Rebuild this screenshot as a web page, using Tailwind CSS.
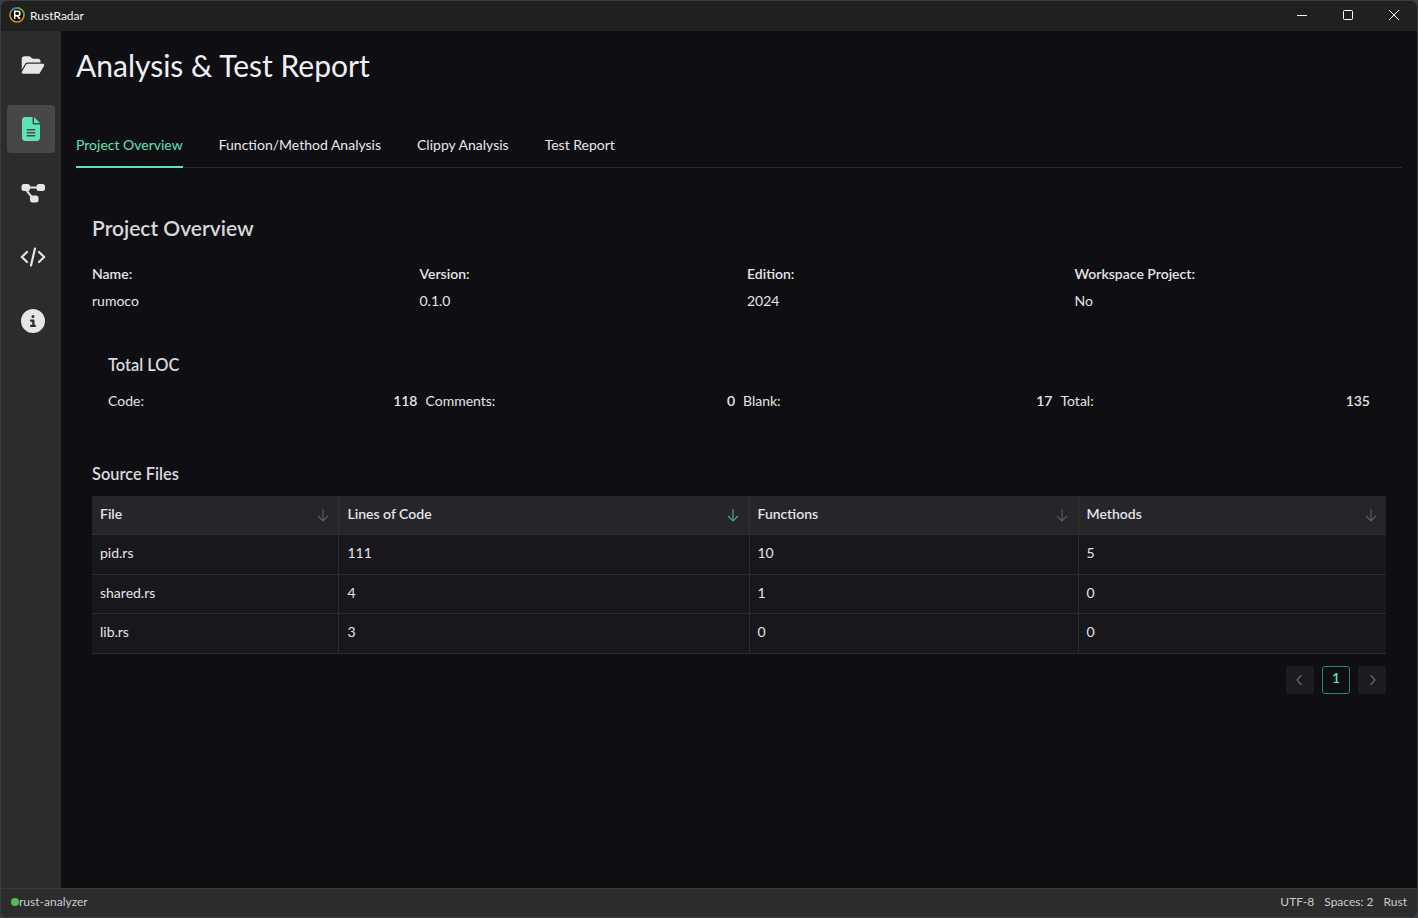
<!DOCTYPE html>
<html>
<head>
<meta charset="utf-8">
<script src="https://cdn.jsdelivr.net/npm/@tailwindcss/browser@4"></script>
</head>
<body class="m-0 bg-[#3a3f44]">
<div class="w-[1418px] h-[918px] flex flex-col overflow-hidden rounded-[8px] border border-[#3c3c3c] box-border font-['Lato','Noto_Sans',sans-serif] text-[14px] text-[#e4e4e6] bg-[#0f0f13]">
  <header class="h-[30px] pb-[2px] shrink-0 flex items-center bg-[#202020]">
    <div class="w-[30px] pl-[8px] flex items-center">
      <svg width="16" height="16" viewBox="0 0 16 16"><circle cx="8" cy="8" r="7" fill="#111" stroke="#e08a1e" stroke-width="1.6"/><path d="M8 1a7 7 0 0 1 7 7" fill="none" stroke="#5aa83a" stroke-width="1.6"/><path d="M1.5 5.500A7 7 0 0 1 8 1" fill="none" stroke="#2f7fd0" stroke-width="1.6"/><path d="M5.700 12V4.200h3a2.200 2.200 0 0 1 0 4.500h-3M8.400 8.700 10.800 12" fill="none" stroke="#fff" stroke-width="1.500"/></svg>
    </div>
    <span class="text-[12px] text-[#f2f2f2] ml-[-1px] mt-[1px]">RustRadar</span>
    <div class="ml-auto flex items-center text-white">
      <div class="w-[46px] h-[28px] flex items-center justify-center"><svg width="12" height="12" viewBox="0 0 12 12"><path d="M1 6.500h10" stroke="#fff" stroke-width="1"/></svg></div>
      <div class="w-[46px] h-[28px] flex items-center justify-center"><svg width="12" height="12" viewBox="0 0 12 12"><rect x="1.500" y="1.500" width="9" height="9" rx="1" fill="none" stroke="#fff" stroke-width="1"/></svg></div>
      <div class="w-[46px] h-[28px] flex items-center justify-center"><svg width="12" height="12" viewBox="0 0 12 12"><path d="M1 1l10 10M11 1 1 11" stroke="#fff" stroke-width="1"/></svg></div>
    </div>
  </header>
  <div class="flex flex-1 min-h-0">
    <aside class="w-[60px] shrink-0 bg-[#2c2c2c] flex flex-col items-center pt-[10px] gap-[16px]">
      <div class="w-[48px] h-[48px] pl-[4px] flex items-center justify-center">
        <svg width="26" height="20" viewBox="0 0 576 512" fill="#e6e6e6"><path d="M88.700 223.800 0 375.800V96C0 60.700 28.700 32 64 32h117.500c17 0 33.300 6.700 45.300 18.700l26.500 26.500c12 12 28.300 18.700 45.300 18.700H416c35.300 0 64 28.700 64 64v32H144c-22.800 0-43.800 12.100-55.300 31.800zm27.600 16.100C122.100 230 132.600 224 144 224h400c11.500 0 22 6.100 27.700 16.100 5.700 10 5.700 22.200-.1 32.100l-112 192C453.900 474 443.400 480 432 480H32c-11.500 0-22-6.100-27.700-16.100-5.700-10-5.700-22.200.1-32.100l112-192z"/></svg>
      </div>
      <div class="w-[48px] h-[48px] rounded-[4px] bg-[#474747] flex items-center justify-center">
        <svg width="18" height="24" viewBox="0 0 384 512" fill="#5fe3b3"><path d="M64 0C28.700 0 0 28.700 0 64v384c0 35.300 28.700 64 64 64h256c35.300 0 64-28.700 64-64V160H256c-17.700 0-32-14.300-32-32V0H64zm192 0v128h128L256 0zM112 256h160c8.800 0 16 7.200 16 16s-7.200 16-16 16H112c-8.800 0-16-7.200-16-16s7.200-16 16-16zm0 64h160c8.800 0 16 7.200 16 16s-7.200 16-16 16H112c-8.800 0-16-7.200-16-16s7.200-16 16-16zm0 64h160c8.800 0 16 7.200 16 16s-7.200 16-16 16H112c-8.800 0-16-7.200-16-16s7.200-16 16-16z"/></svg>
      </div>
      <div class="w-[48px] h-[48px] pl-[4px] flex items-center justify-center">
        <svg width="24" height="20" viewBox="0 0 24 20" fill="#e6e6e6"><rect x="0.500" y="1" width="8.500" height="7" rx="2.500"/><rect x="15.500" y="1" width="8.500" height="7" rx="2.500"/><rect x="9" y="12.500" width="8.500" height="7" rx="2.500"/><path d="M8 3.500h8v2H8zM6.500 7l5.500 7-1.500 1.300L5 8.500z"/></svg>
      </div>
      <div class="w-[48px] h-[48px] pl-[4px] flex items-center justify-center">
        <svg width="26" height="20" viewBox="0 0 26 20" fill="none" stroke="#e6e6e6" stroke-width="2.200" stroke-linecap="round" stroke-linejoin="round"><path d="M7 5 1.800 10 7 15M19 5l5.200 5L19 15M15 1.500 11 18.500"/></svg>
      </div>
      <div class="w-[48px] h-[48px] pl-[4px] flex items-center justify-center">
        <svg width="24" height="24" viewBox="0 0 512 512" fill="#e6e6e6"><path d="M256 512a256 256 0 1 0 0-512 256 256 0 1 0 0 512zm-40-176h24v-64h-24c-13.300 0-24-10.700-24-24s10.700-24 24-24h48c13.300 0 24 10.700 24 24v88h8c13.300 0 24 10.700 24 24s-10.700 24-24 24h-80c-13.300 0-24-10.700-24-24s10.700-24 24-24zm40-208a32 32 0 1 1 0 64 32 32 0 1 1 0-64z"/></svg>
      </div>
    </aside>
    <main class="flex-1 min-w-0 pl-[15px] pr-[15px] pt-[14px]">
      <h1 class="text-[30px] leading-[40px] font-normal text-[#f0f0f2] m-0">Analysis &amp; Test Report</h1>
      <nav class="mt-[37px] flex gap-[36px] border-b border-[#2a2a2e] h-[46px] text-[14px] text-[#e8e8ea]">
        <div class="h-[46px] pt-[13px] leading-[20px] border-b-2 border-[#5fe3b3] text-[#5fe3b3]">Project Overview</div>
        <div class="pt-[13px] leading-[20px]">Function/Method Analysis</div>
        <div class="pt-[13px] leading-[20px]">Clippy Analysis</div>
        <div class="pt-[13px] leading-[20px]">Test Report</div>
      </nav>
      <section class="px-[16px] pt-[44px]">
        <h2 class="text-[21px] leading-[32px] font-semibold text-[#d8d8dc] m-0">Project Overview</h2>
        <div class="grid grid-cols-4 gap-x-[16px] mt-[19px]">
          <div><div class="font-semibold leading-[22px]">Name:</div><div class="mt-[5px] leading-[22px]">rumoco</div></div>
          <div><div class="font-semibold leading-[22px]">Version:</div><div class="mt-[5px] leading-[22px]">0.1.0</div></div>
          <div><div class="font-semibold leading-[22px]">Edition:</div><div class="mt-[5px] leading-[22px]">2024</div></div>
          <div><div class="font-semibold leading-[22px]">Workspace Project:</div><div class="mt-[5px] leading-[22px]">No</div></div>
        </div>
        <div class="px-[16px] mt-[41px]">
          <h3 class="text-[16.4px] leading-[24px] font-semibold text-[#d8d8dc] m-0">Total LOC</h3>
          <div class="grid grid-cols-4 gap-x-[8px] mt-[13px] leading-[22px]">
            <div class="flex justify-between"><span>Code:</span><span class="font-semibold">118</span></div>
            <div class="flex justify-between"><span>Comments:</span><span class="font-semibold">0</span></div>
            <div class="flex justify-between"><span>Blank:</span><span class="font-semibold">17</span></div>
            <div class="flex justify-between"><span>Total:</span><span class="font-semibold">135</span></div>
          </div>
        </div>
        <h3 class="text-[16.4px] leading-[24px] font-semibold text-[#d8d8dc] m-0 mt-[50px]">Source Files</h3>
        <table class="w-[1294px] mt-[10px] border-collapse table-fixed bg-[#18181c]">
          <colgroup><col class="w-[246px]"><col class="w-[411px]"><col class="w-[329px]"><col class="w-[308px]"></colgroup>
          <thead>
            <tr class="h-[38px] bg-[#26262a] border-b border-[#303034]">
              <th class="px-[8px] pb-[3px] text-left font-semibold border-r border-[#303034]"><div class="flex items-center justify-between">File<svg class="mt-[3px]" width="14" height="14" viewBox="0 0 14 14" fill="none" stroke="#5c5c61" stroke-width="1.100"><path d="M7 1v12M2 8 7 13l5-5"/></svg></div></th>
              <th class="pl-[9px] pr-[8px] pb-[3px] text-left font-semibold border-r border-[#303034]"><div class="flex items-center justify-between">Lines of Code<svg class="mt-[3px] -translate-x-[1px]" width="14" height="14" viewBox="0 0 14 14" fill="none" stroke="#47ad8a" stroke-width="1.100"><path d="M7 1v12M2 8 7 13l5-5"/></svg></div></th>
              <th class="px-[8px] pb-[3px] text-left font-semibold border-r border-[#303034]"><div class="flex items-center justify-between">Functions<svg class="mt-[3px] -translate-x-[1px]" width="14" height="14" viewBox="0 0 14 14" fill="none" stroke="#5c5c61" stroke-width="1.100"><path d="M7 1v12M2 8 7 13l5-5"/></svg></div></th>
              <th class="px-[8px] pb-[3px] text-left font-semibold"><div class="flex items-center justify-between">Methods<svg class="mt-[3px]" width="14" height="14" viewBox="0 0 14 14" fill="none" stroke="#5c5c61" stroke-width="1.100"><path d="M7 1v12M2 8 7 13l5-5"/></svg></div></th>
            </tr>
          </thead>
          <tbody class="font-normal">
            <tr class="h-[40px] border-b border-[#2c2c30]"><td class="px-[8px] pb-[3px] border-r border-[#2c2c30]">pid.rs</td><td class="pl-[9px] pr-[8px] pb-[3px] border-r border-[#2c2c30]">111</td><td class="px-[8px] pb-[3px] border-r border-[#2c2c30]">10</td><td class="px-[8px] pb-[3px]">5</td></tr>
            <tr class="h-[39px] border-b border-[#2c2c30]"><td class="px-[8px] pb-[2px] border-r border-[#2c2c30]">shared.rs</td><td class="pl-[9px] pr-[8px] pb-[2px] border-r border-[#2c2c30]">4</td><td class="px-[8px] pb-[2px] border-r border-[#2c2c30]">1</td><td class="px-[8px] pb-[2px]">0</td></tr>
            <tr class="h-[40px] border-b border-[#2c2c30]"><td class="px-[8px] pb-[3px] border-r border-[#2c2c30]">lib.rs</td><td class="pl-[9px] pr-[8px] pb-[3px] border-r border-[#2c2c30]">3</td><td class="px-[8px] pb-[3px] border-r border-[#2c2c30]">0</td><td class="px-[8px] pb-[3px]">0</td></tr>
          </tbody>
        </table>
        <div class="w-[1294px] flex justify-end gap-[8px] mt-[12px]">
          <div class="w-[28px] h-[28px] rounded-[3px] bg-[#1c1c20] flex items-center justify-center"><svg width="10" height="12" viewBox="0 0 10 12" fill="none" stroke="#66666b" stroke-width="1.200"><path d="M6.500 1 2 6l4.500 5"/></svg></div>
          <div class="w-[28px] h-[28px] rounded-[3px] border border-[#37806a] flex items-center justify-center text-[#5fe3b3] font-semibold leading-none pb-[4px]">1</div>
          <div class="w-[28px] h-[28px] rounded-[3px] bg-[#1c1c20] flex items-center justify-center"><svg width="10" height="12" viewBox="0 0 10 12" fill="none" stroke="#66666b" stroke-width="1.200"><path d="M3.500 1 8 6l-4.500 5"/></svg></div>
        </div>
      </section>
    </main>
  </div>
  <footer class="h-[29px] pb-[3px] shrink-0 flex items-center bg-[#2c2c2c] border-t border-[#3a3a3a] pl-[10px] pr-[10px] text-[12px] text-[#c9ccd0]">
    <span class="w-[8px] h-[8px] rounded-full bg-[#4fc04f] mt-[1px]"></span>
    <span>rust-analyzer</span>
    <div class="ml-auto flex gap-[10px]"><span>UTF-8</span><span>Spaces: 2</span><span>Rust</span></div>
  </footer>
</div>
</body>
</html>
